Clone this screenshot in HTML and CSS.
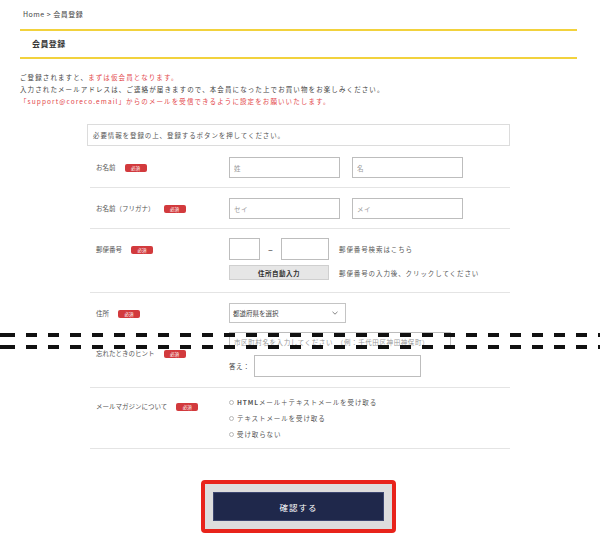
FILE: index.html
```html
<!DOCTYPE html>
<html lang="ja">
<head>
    <meta charset="UTF-8">
    <meta name="viewport" content="width=device-width, initial-scale=1.0">
    <title>会員登録</title>
    <link rel="stylesheet" href="styles.css">
</head>
<body>
    <div class="page">
        <div class="breadcrumb">Home &gt; 会員登録</div>
        <h1 class="page-title">会員登録</h1>

        <div class="intro">
            <p>ご登録されますと、<span class="red">まずは仮会員となります。</span></p>
            <p>入力されたメールアドレスは、ご連絡が届きますので、本会員になった上でお買い物をお楽しみください。</p>
            <p class="red">「support@coreco.email」からのメールを受信できるように設定をお願いいたします。</p>
        </div>

        <form class="form">
            <div class="notice">必要情報を登録の上、登録するボタンを押してください。</div>

            <div class="row row-name">
                <div class="label">お名前<span class="req">必須</span></div>
                <div class="field pair">
                    <input class="text" type="text" placeholder="姓">
                    <input class="text" type="text" placeholder="名">
                </div>
            </div>

            <div class="row row-kana">
                <div class="label">お名前（フリガナ）<span class="req">必須</span></div>
                <div class="field pair">
                    <input class="text" type="text" placeholder="セイ">
                    <input class="text" type="text" placeholder="メイ">
                </div>
            </div>

            <div class="row row-zip">
                <div class="label label-zip">郵便番号<span class="req">必須</span></div>
                <div class="field zip-grid">
                    <div class="zip-inputs">
                        <input class="text zip1" type="text">
                        <span class="zip-dash">–</span>
                        <input class="text zip2" type="text">
                    </div>
                    <span class="hint-text">郵便番号検索はこちら</span>
                    <button class="auto-btn" type="button">住所自動入力</button>
                    <span class="hint-text">郵便番号の入力後、クリックしてください</span>
                </div>
            </div>

            <div class="row row-address">
                <div class="label label-select">住所<span class="req">必須</span></div>
                <div class="field stack">
                    <div class="select-wrap">
                        <select class="select">
                            <option>都道府県を選択</option>
                        </select>
                        <svg class="chevron" width="6" height="4" viewBox="0 0 6 4">
                            <path d="M0.5 0.8 L3 3.2 L5.5 0.8" fill="none" stroke="#777" stroke-width="0.9"/>
                        </svg>
                    </div>
                    <input class="text city" type="text" placeholder="市区町村名を入力してください　（例：千代田区神田神保町）">
                </div>
            </div>

            <div class="row row-hint">
                <div class="label label-hint">忘れたときのヒント<span class="req">必須</span></div>
                <div class="field answer">
                    <span>答え：</span>
                    <input class="text answer-input" type="text">
                </div>
            </div>

            <div class="row row-mail">
                <div class="label label-mail">メールマガジンについて<span class="req">必須</span></div>
                <div class="field radios">
                    <label class="radio"><input type="radio" name="mag"><b>HTML</b>メール＋テキストメールを受け取る</label>
                    <label class="radio"><input type="radio" name="mag">テキストメールを受け取る</label>
                    <label class="radio"><input type="radio" name="mag">受け取らない</label>
                </div>
            </div>
        </form>

        <div class="submit-area">
            <div class="submit-frame">
                <button class="submit" type="button">確認する</button>
            </div>
        </div>
    </div>

    <!-- 省略の切り取り線 -->
    <div class="cut">
        <div class="dash"></div>
        <div class="dash"></div>
    </div>
</body>
</html>
```

FILE: styles.css
```css
* {
    margin: 0;
    padding: 0;
    box-sizing: border-box;
}

body {
    font-family: "Noto Sans CJK JP", "Noto Sans", sans-serif;
    background: #fff;
    color: #444;
    font-size: 6.5px;
    position: relative;
    height: 544px;
    overflow: hidden;
}

.page {
    padding: 0 23px 0 20px;
}

.breadcrumb {
    padding: 10px 0 0 3px;
    line-height: 8px;
    font-size: 7px;
    letter-spacing: 0.5px;
    color: #444;
    margin-bottom: 11px;
}

.page-title {
    border-top: 2px solid #f2d23d;
    border-bottom: 2px solid #f2d23d;
    height: 30px;
    line-height: 26px;
    padding-left: 12px;
    font-size: 8px;
    font-weight: bold;
    color: #333;
    letter-spacing: 0.4px;
}

.intro {
    margin-top: 12px;
    line-height: 12px;
    letter-spacing: 1.1px;
    color: #444;
}

.red {
    color: #e3474b;
}

.form {
    margin: 17px 0 0 67px;
    width: 423px;
}

.notice {
    border: 1px solid #dcdcdc;
    line-height: 20px;
    padding-left: 5px;
    letter-spacing: 0.9px;
    color: #555;
}

.row {
    display: flex;
    align-items: flex-start;
    margin-left: 3px;
    border-bottom: 1px solid #e4e4e4;
}

.label {
    width: 139px;
    padding-left: 6px;
    line-height: 21px;
    color: #555;
    flex-shrink: 0;
}

.req {
    display: inline-block;
    margin-left: 9px;
    width: 22px;
    height: 8px;
    line-height: 8px;
    border-radius: 2px;
    background: #d23a3d;
    color: #fff;
    font-size: 4.5px;
    text-align: center;
    vertical-align: 0;
}

.field {
    flex: 1;
}

.text {
    display: block;
    border: 1px solid #bdbdbd;
    border-radius: 0;
    background: #fff;
    font-family: inherit;
    font-size: 6.5px;
    color: #444;
    padding: 0 4px;
    outline: none;
}

.text::placeholder {
    color: #9a9a9a;
    letter-spacing: 0.6px;
}

/* お名前 */
.row-name {
    padding: 11px 0 9px;
}

.row-kana {
    padding: 10px 0 9px;
}

.pair {
    display: flex;
    gap: 12px;
}

.pair .text {
    width: 111px;
    height: 21px;
}

/* 郵便番号 */
.row-zip {
    padding: 9px 0 12px;
}

.label-zip {
    line-height: 22px;
}

.zip-grid {
    display: grid;
    grid-template-columns: 100px auto;
    column-gap: 10px;
    row-gap: 5px;
    align-items: center;
}

.zip-inputs {
    display: flex;
    align-items: center;
}

.zip1 {
    width: 31px;
    height: 22px;
}

.zip2 {
    width: 48px;
    height: 22px;
}

.zip-dash {
    width: 21px;
    text-align: center;
    font-size: 9px;
    color: #333;
}

.hint-text {
    letter-spacing: 0.9px;
    color: #555;
}

.auto-btn {
    height: 15px;
    border: 1px solid #cfcfcf;
    background: #e6e6e6;
    font-family: inherit;
    font-size: 6.5px;
    font-weight: bold;
    color: #333;
    letter-spacing: 0.5px;
}

/* 住所 */
.row-address {
    padding-top: 10px;
    height: 56px;
    overflow: hidden;
    border-bottom: none;
}

.label-select {
    line-height: 20px;
}

.stack {
    display: flex;
    flex-direction: column;
    gap: 9px;
}

.select-wrap {
    position: relative;
    width: 117px;
    height: 20px;
}

.select {
    appearance: none;
    -webkit-appearance: none;
    width: 100%;
    height: 100%;
    border: 1px solid #c4c4c4;
    border-radius: 0;
    background: #fff;
    font-family: inherit;
    font-size: 6.5px;
    color: #444;
    padding-left: 3px;
}

.chevron {
    position: absolute;
    right: 8px;
    top: 8px;
    pointer-events: none;
}

.city {
    width: 222px;
    height: 20px;
}

/* ヒント */
.row-hint {
    padding-bottom: 10px;
}

.label-hint {
    line-height: 8px;
}

.answer {
    display: flex;
    align-items: center;
    gap: 4px;
    margin-top: 6px;
    letter-spacing: 0.5px;
}

.answer-input {
    width: 167px;
    height: 22px;
}

/* メールマガジン */
.row-mail {
    padding: 6px 0 6px;
}

.label-mail {
    margin-top: 4px;
    line-height: 16px;
}

.radios {
    display: flex;
    flex-direction: column;
}

.radio {
    display: flex;
    align-items: center;
    line-height: 16px;
    letter-spacing: 0.9px;
    color: #555;
}

.radio b {
    font-weight: bold;
    color: #555;
}

.radio input {
    appearance: none;
    -webkit-appearance: none;
    width: 5px;
    height: 5px;
    border: 1px solid #b8b8b8;
    border-radius: 50%;
    margin: 0 3px 0 0;
}

/* 確認ボタン */
.submit-area {
    display: flex;
    justify-content: center;
    margin: 31px 0 0 67px;
    width: 423px;
}

.submit-frame {
    border: 4px solid #e8231b;
    border-radius: 4px;
    background: #dddddd;
    padding: 8px;
}

.submit {
    display: block;
    width: 171px;
    height: 29px;
    background: #1f284b;
    border: 1px solid #3c4670;
    color: #fff;
    font-family: inherit;
    font-size: 8.5px;
    letter-spacing: 1px;
}

.cut {
    position: absolute;
    top: 333px;
    left: 0;
    width: 600px;
    display: flex;
    flex-direction: column;
    gap: 8px;
    pointer-events: none;
}

.dash {
    height: 4px;
    background: repeating-linear-gradient(to right, #111 0 11px, transparent 11px 22px);
    background-position: 4px 0;
}
```
